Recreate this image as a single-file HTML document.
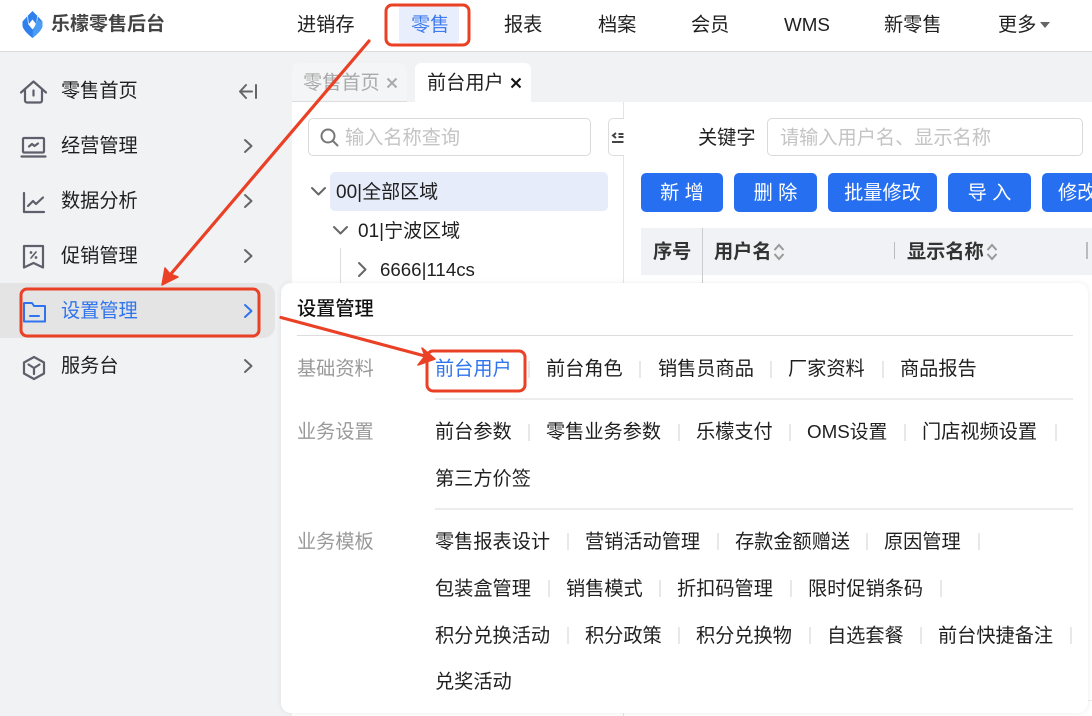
<!DOCTYPE html>
<html lang="zh">
<head>
<meta charset="utf-8">
<title>乐檬零售后台</title>
<style>
html,body{margin:0;padding:0;}
body{width:1092px;height:716px;overflow:hidden;position:relative;background:#f1f2f4;font-family:"Liberation Sans","Noto Sans CJK SC",sans-serif;font-size:19.2px;color:#1f1f1f;}
.a{position:absolute;}
.t{position:absolute;white-space:nowrap;line-height:26px;height:26px;margin-top:1px;}
.g{color:#999;}
.ph{color:#c4c4c4;}
.btn{position:absolute;top:173px;height:39px;line-height:41px;background:#256ff0;color:#fff;border-radius:5px;text-align:center;white-space:nowrap;overflow:hidden;}
.sep{position:absolute;width:2px;height:17px;background:#e8e8e8;}
.line{position:absolute;height:2px;background:#ececec;}
svg{position:absolute;overflow:visible;}
</style>
</head>
<body>
<!-- header -->
<div class="a" style="left:0;top:0;width:1092px;height:51px;background:#fff;border-bottom:1px solid #dadada;"></div>
<svg style="left:21.500px;top:11px" width="21" height="27" viewBox="0 0 21 27">
<path d="M10.500 0L15.500 5 20.500 10.500V15Q19.500 20 10.500 27 1.500 20 0.500 15V10.500L5.500 5Z" fill="#2f80ed"/>
<path d="M10.500 8.500L14.500 13.500 10.500 18.500 6.500 13.500Z" fill="#fff"/>
<path d="M15.500 5L14.500 13.500M5.500 5L6.500 13.500" stroke="#fff" stroke-width=".7" fill="none"/>
<path d="M15.500 9L20.500 10.500V15Q19.500 20 10.500 27L11 19.500Z" fill="#4a9cf4"/>
</svg>
<div class="t" style="left:51px;top:11px;font-size:19px;font-weight:bold;color:#444;">乐檬零售后台</div>
<div class="a" style="left:399px;top:5px;width:60px;height:38px;background:#e8eefb;border-radius:3px;"></div>
<div class="t" style="left:297px;top:12px;">进销存</div>
<div class="t" style="left:411px;top:12px;color:#3f7bf0;">零售</div>
<div class="t" style="left:504px;top:12px;">报表</div>
<div class="t" style="left:598px;top:12px;">档案</div>
<div class="t" style="left:691px;top:12px;">会员</div>
<div class="t" style="left:784px;top:11px;font-size:18.800px;">WMS</div>
<div class="t" style="left:884px;top:12px;">新零售</div>
<div class="t" style="left:998px;top:12px;">更多</div>
<svg style="left:1040px;top:22px" width="10" height="6"><path d="M0 0H10L5 6Z" fill="#666"/></svg>

<!-- sidebar -->
<div class="a" style="left:0;top:283px;width:275px;height:55px;background:#e4e4e4;border-radius:0 12px 12px 0;"></div>
<svg style="left:20px;top:80px" width="27" height="25" viewBox="0 0 27 25" fill="none" stroke="#5d606b" stroke-width="2.200" stroke-linejoin="round" stroke-linecap="round">
<path d="M1 12.500L13.500 1.500 26 12.500"/><path d="M5 10V20.500a2 2 0 0 0 2 2H20a2 2 0 0 0 2-2V10"/><path d="M13.500 10.500V15.500"/></svg>
<svg style="left:21px;top:137px" width="25" height="21" viewBox="0 0 25 21" fill="none" stroke="#5d606b" stroke-width="2.200" stroke-linecap="round" stroke-linejoin="round">
<rect x="2" y="1" width="21" height="14.500" rx="1"/><path d="M0.500 19.500H24.500"/><path d="M8 9.500L11 7 13.500 9 17 6.500"/></svg>
<svg style="left:23px;top:192px" width="22" height="22" viewBox="0 0 22 22" fill="none" stroke="#5d606b" stroke-width="2.200" stroke-linecap="round" stroke-linejoin="round">
<path d="M1 1V20H21"/><path d="M5 14L10 9 13 12 20 5.500"/></svg>
<svg style="left:23px;top:245px" width="21" height="24" viewBox="0 0 21 24" fill="none" stroke="#5d606b" stroke-width="2.200" stroke-linecap="round" stroke-linejoin="round">
<path d="M1 1H20V22.500L10.500 18 1 22.500Z"/><path d="M13 7L8 13" stroke-width="1.600"/><circle cx="8" cy="7.500" r=".7" stroke-width="1.300"/><circle cx="13" cy="12.500" r=".7" stroke-width="1.300"/></svg>
<svg style="left:23px;top:302px" width="23" height="21" viewBox="0 0 23 21" fill="none" stroke="#2f74ee" stroke-width="2" stroke-linecap="round" stroke-linejoin="round">
<path d="M1 1H9L11 4H22V19.500H1Z"/><path d="M7 14H16"/></svg>
<svg style="left:23px;top:356px" width="22" height="24" viewBox="0 0 22 24" fill="none" stroke="#5d606b" stroke-width="2.200" stroke-linecap="round" stroke-linejoin="round">
<path d="M11 1L21 6.500V17.500L11 23 1 17.500V6.500Z"/><path d="M5.500 8.500L11 12 16.500 8.500M11 12V18"/></svg>
<div class="t" style="left:61px;top:78px;">零售首页</div>
<div class="t" style="left:61px;top:133px;">经营管理</div>
<div class="t" style="left:61px;top:188px;">数据分析</div>
<div class="t" style="left:61px;top:243px;">促销管理</div>
<div class="t" style="left:61px;top:298px;color:#2f74ee;">设置管理</div>
<div class="t" style="left:61px;top:353px;">服务台</div>
<svg style="left:239px;top:84px" width="18" height="15" fill="none" stroke="#666" stroke-width="2" stroke-linecap="round" stroke-linejoin="round"><path d="M7 1L1 7.500 7 14M1 7.500H13M17 1V14"/></svg>
<svg style="left:244px;top:139px" width="9" height="14" fill="none" stroke="#666" stroke-width="2" stroke-linecap="round" stroke-linejoin="round"><path d="M1 1L7.500 7 1 13"/></svg>
<svg style="left:244px;top:194px" width="9" height="14" fill="none" stroke="#666" stroke-width="2" stroke-linecap="round" stroke-linejoin="round"><path d="M1 1L7.500 7 1 13"/></svg>
<svg style="left:244px;top:249px" width="9" height="14" fill="none" stroke="#666" stroke-width="2" stroke-linecap="round" stroke-linejoin="round"><path d="M1 1L7.500 7 1 13"/></svg>
<svg style="left:244px;top:304px" width="9" height="14" fill="none" stroke="#2f74ee" stroke-width="2" stroke-linecap="round" stroke-linejoin="round"><path d="M1 1L7.500 7 1 13"/></svg>
<svg style="left:244px;top:359px" width="9" height="14" fill="none" stroke="#666" stroke-width="2" stroke-linecap="round" stroke-linejoin="round"><path d="M1 1L7.500 7 1 13"/></svg>

<!-- tabs -->
<div class="a" style="left:292px;top:63px;width:115px;height:38px;background:#f4f5f6;border-radius:6px 6px 0 0;border-bottom:1px solid #ddd;"></div>
<div class="a" style="left:415px;top:63px;width:116px;height:40px;background:#fff;border-radius:6px 6px 0 0;"></div>
<div class="t" style="left:303px;top:70px;color:#aaa;">零售首页</div>
<div class="t" style="left:427px;top:70px;">前台用户</div>
<svg style="left:387px;top:78px" width="10" height="10" stroke="#aaa" stroke-width="2"><path d="M0.500 0.500L9.500 9.500M9.500 0.500L0.500 9.500"/></svg>
<svg style="left:511px;top:78px" width="10" height="10" stroke="#111" stroke-width="2"><path d="M0.500 0.500L9.500 9.500M9.500 0.500L0.500 9.500"/></svg>

<!-- content -->
<div class="a" style="left:292px;top:102px;width:800px;height:614px;background:#fff;"></div>
<div class="a" style="left:623px;top:102px;width:1px;height:614px;background:#e4e4e4;"></div>

<!-- tree panel -->
<div class="a" style="left:308px;top:118px;width:281px;height:36px;border:1px solid #d9d9d9;border-radius:5px;background:#fff;"></div>
<svg style="left:320px;top:128px" width="19" height="19" fill="none" stroke="#777" stroke-width="2" stroke-linecap="round"><circle cx="8" cy="8" r="6.500"/><path d="M13 13L17.500 17.500"/></svg>
<div class="t ph" style="left:345px;top:125px;">输入名称查询</div>
<div class="a" style="left:608px;top:118px;width:16px;height:38px;border:1px solid #ddd;border-right:none;border-radius:5px 0 0 5px;background:#fff;box-sizing:border-box;"></div>
<svg style="left:612px;top:132px" width="12" height="12" fill="none" stroke="#444" stroke-width="2"><path d="M4 1L1 3.500 4 6M6.500 2H11.500M6.500 5H11.500M0 10H11.500"/></svg>
<div class="a" style="left:330px;top:172px;width:278px;height:39px;background:#e6ecf9;border-radius:5px;"></div>
<svg style="left:311px;top:187px" width="15" height="9" fill="none" stroke="#666" stroke-width="2" stroke-linecap="round" stroke-linejoin="round"><path d="M1 1L7.500 7.500 14 1"/></svg>
<div class="t" style="left:336px;top:179px;font-size:19px;">00|全部区域</div>
<svg style="left:333px;top:226px" width="15" height="9" fill="none" stroke="#666" stroke-width="2" stroke-linecap="round" stroke-linejoin="round"><path d="M1 1L7.500 7.500 14 1"/></svg>
<div class="t" style="left:358px;top:218px;font-size:19px;">01|宁波区域</div>
<div class="a" style="left:340px;top:248px;width:1px;height:35px;background:#ddd;"></div>
<svg style="left:358px;top:262px" width="9" height="15" fill="none" stroke="#666" stroke-width="2" stroke-linecap="round" stroke-linejoin="round"><path d="M1 1L7.500 7.500 1 14"/></svg>
<div class="t" style="left:380px;top:256px;font-size:18.700px;">6666|114cs</div>

<!-- right panel -->
<div class="t" style="left:698px;top:125px;">关键字</div>
<div class="a" style="left:767px;top:118px;width:314px;height:36px;border:1px solid #d9d9d9;border-radius:5px;background:#fff;"></div>
<div class="t ph" style="left:780px;top:125px;">请输入用户名、显示名称</div>
<div class="btn" style="left:641px;width:82px;">新 增</div>
<div class="btn" style="left:734px;width:83px;">删 除</div>
<div class="btn" style="left:828px;width:109px;">批量修改</div>
<div class="btn" style="left:948px;width:83px;">导 入</div>
<div class="btn" style="left:1042px;text-align:left;padding-left:16px;width:50px;border-radius:5px 0 0 5px;">修改</div>
<div class="a" style="left:641px;top:228px;width:451px;height:47px;background:#f0f2f5;"></div>
<div class="t" style="left:653px;top:239px;font-weight:bold;color:#333;">序号</div>
<div class="a" style="left:702px;top:228px;width:1px;height:55px;background:#ccc;"></div>
<div class="t" style="left:714px;top:239px;font-weight:bold;color:#333;">用户名</div>
<div class="t" style="left:907px;top:239px;font-weight:bold;color:#333;">显示名称</div>
<div class="a" style="left:894px;top:242px;width:1px;height:17px;background:#bbb;"></div>
<div class="a" style="left:1086px;top:242px;width:2px;height:17px;background:#bbb;"></div>
<svg style="left:773px;top:243px" width="12" height="18" fill="none" stroke="#999" stroke-width="2"><path d="M1.500 7L6 2 10.500 7M1.500 11L6 16 10.500 11"/></svg>
<svg style="left:986px;top:243px" width="12" height="18" fill="none" stroke="#999" stroke-width="2"><path d="M1.500 7L6 2 10.500 7M1.500 11L6 16 10.500 11"/></svg>
<div class="a" style="left:292px;top:700px;width:800px;height:1px;background:#eee;"></div>

<!-- popup -->
<div class="a" style="left:281px;top:283px;width:807px;height:430px;background:#fff;border-radius:10px;box-shadow:0 0 6px rgba(0,0,0,.08);"></div>
<div class="t" style="left:297px;top:296px;font-weight:500;color:#111;">设置管理</div>
<div class="line" style="left:297px;top:335px;width:776px;height:1px;background:#ddd;"></div>
<div class="t g" style="left:297px;top:356px;">基础资料</div>
<div class="t" style="left:435px;top:356px;color:#2f74ee;">前台用户</div>
<div class="t" style="left:546px;top:356px;">前台角色</div>
<div class="t" style="left:658px;top:356px;">销售员商品</div>
<div class="t" style="left:788px;top:356px;">厂家资料</div>
<div class="t" style="left:900px;top:356px;">商品报告</div>
<div class="sep" style="left:528px;top:361px;"></div>
<div class="sep" style="left:639px;top:361px;"></div>
<div class="sep" style="left:770px;top:361px;"></div>
<div class="sep" style="left:882px;top:361px;"></div>
<div class="line" style="left:435px;top:398px;width:638px;"></div>

<div class="t g" style="left:297px;top:419px;">业务设置</div>
<div class="t" style="left:435px;top:419px;">前台参数</div>
<div class="t" style="left:546px;top:419px;">零售业务参数</div>
<div class="t" style="left:696px;top:419px;">乐檬支付</div>
<div class="t" style="left:807px;top:418px;font-size:18.800px;">OMS设置</div>
<div class="t" style="left:922px;top:419px;">门店视频设置</div>
<div class="sep" style="left:528px;top:424px;"></div>
<div class="sep" style="left:678px;top:424px;"></div>
<div class="sep" style="left:789px;top:424px;"></div>
<div class="sep" style="left:904px;top:424px;"></div>
<div class="sep" style="left:1055px;top:424px;"></div>
<div class="t" style="left:435px;top:466px;">第三方价签</div>
<div class="line" style="left:435px;top:508px;width:638px;"></div>

<div class="t g" style="left:297px;top:529px;">业务模板</div>
<div class="t" style="left:435px;top:529px;">零售报表设计</div>
<div class="t" style="left:585px;top:529px;">营销活动管理</div>
<div class="t" style="left:735px;top:529px;">存款金额赠送</div>
<div class="t" style="left:884px;top:529px;">原因管理</div>
<div class="sep" style="left:567px;top:533px;"></div>
<div class="sep" style="left:717px;top:533px;"></div>
<div class="sep" style="left:866px;top:533px;"></div>
<div class="sep" style="left:978px;top:533px;"></div>
<div class="t" style="left:435px;top:576px;">包装盒管理</div>
<div class="t" style="left:566px;top:576px;">销售模式</div>
<div class="t" style="left:677px;top:576px;">折扣码管理</div>
<div class="t" style="left:808px;top:576px;">限时促销条码</div>
<div class="sep" style="left:548px;top:580px;"></div>
<div class="sep" style="left:659px;top:580px;"></div>
<div class="sep" style="left:790px;top:580px;"></div>
<div class="sep" style="left:940px;top:580px;"></div>
<div class="t" style="left:435px;top:623px;">积分兑换活动</div>
<div class="t" style="left:585px;top:623px;">积分政策</div>
<div class="t" style="left:696px;top:623px;">积分兑换物</div>
<div class="t" style="left:827px;top:623px;">自选套餐</div>
<div class="t" style="left:938px;top:623px;">前台快捷备注</div>
<div class="sep" style="left:567px;top:627px;"></div>
<div class="sep" style="left:678px;top:627px;"></div>
<div class="sep" style="left:809px;top:627px;"></div>
<div class="sep" style="left:920px;top:627px;"></div>
<div class="sep" style="left:1070px;top:627px;"></div>
<div class="t" style="left:435px;top:669px;">兑奖活动</div>

<!-- annotations -->
<svg style="left:0;top:0" width="1092" height="716" fill="none" stroke="#e94026" stroke-linecap="round" stroke-linejoin="round">
<path d="M369 41L170 275" stroke-width="3.200"/>
<path d="M162 285L165 268 170 274 178 277 Z" fill="#e94026" stroke-width="1.500"/>
<path d="M281 317.500L425 356" stroke-width="3.200"/>
<path d="M435 359L418 365 425 356 422 348 Z" fill="#e94026" stroke-width="1.500"/>
<rect x="386" y="5" width="83" height="40" rx="6" stroke-width="3"/>
<rect x="21" y="289" width="238" height="47" rx="6" stroke-width="3"/>
<rect x="427" y="351" width="98" height="40" rx="6" stroke-width="3"/>
</svg>
</body>
</html>
